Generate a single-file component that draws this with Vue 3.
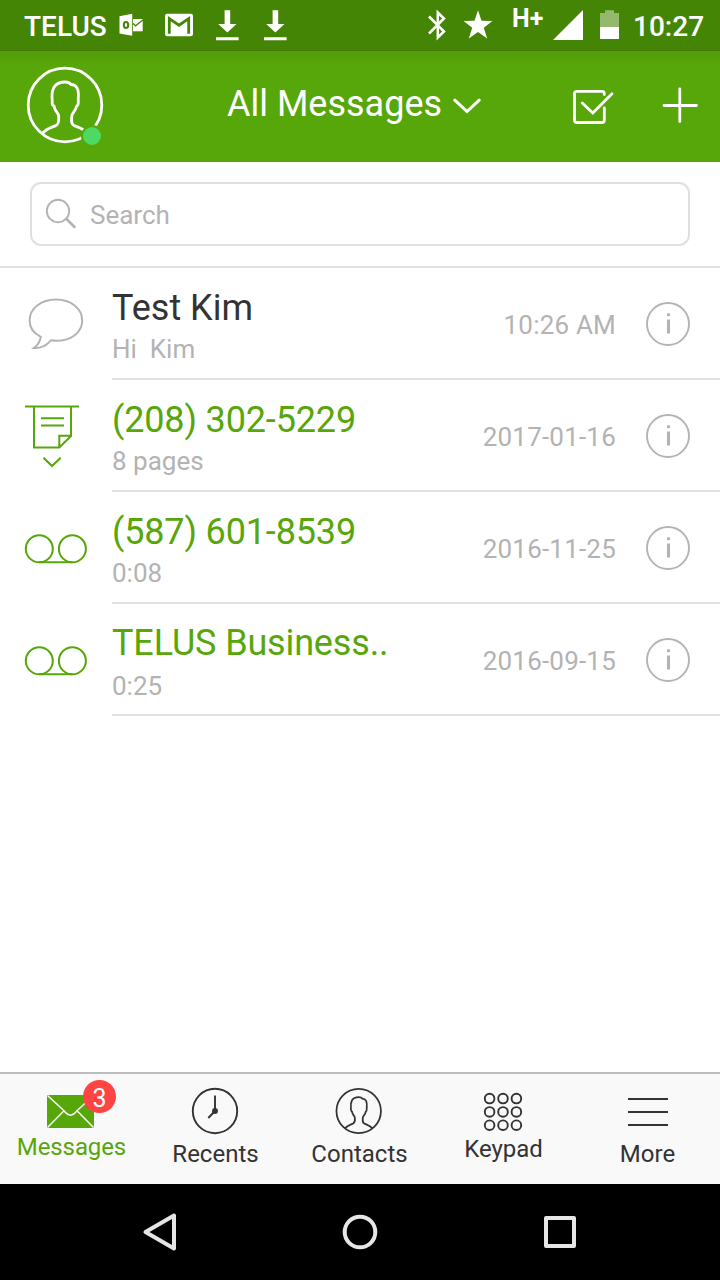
<template>
  <div class="screen">
    <div class="status-bar">
      <span class="carrier">TELUS</span>
      <svg class="notice" viewBox="0 0 48 50">
        <path d="M12.5 16.2 25.2 13.8V35.8L12.5 33.4Z" fill="#fff" />
        <ellipse cx="19" cy="25" rx="2.2" ry="3" fill="none" stroke="#458506" stroke-width="2" />
        <path d="M26 19H35.7V31.3H26Z" fill="#fff" />
        <path d="M26 23.5 28.6 25.8 36 19.8" fill="none" stroke="#458506" stroke-width="1.3" />
      </svg>
      <svg class="notice" viewBox="0 0 48 50">
        <rect x="10" y="13.7" width="28" height="22.6" rx="2.2" fill="#fff" />
        <path d="M14.3 33.7V18.6L24 25.2 33.7 18.6V33.7" fill="none" stroke="#458506" stroke-width="2.8" />
      </svg>
      <svg v-for="n in 2" :key="n" class="notice" viewBox="0 0 48 50">
        <path d="M21.6 10.3H27.2V24H33.5L24.4 32.5 15.2 24H21.6ZM13 37.3H35.6V40.3H13Z" fill="#fff" />
      </svg>
      <svg class="bluetooth" viewBox="0 0 24 50">
        <path d="M4 16.5 19 31.5 12.8 37.5V12.5L19 18.5 4 33.5" fill="none" stroke="#fff" stroke-width="2.5" />
      </svg>
      <svg class="star" viewBox="0 0 32 50">
        <path d="M16 10.3 19.5 20.8 30.4 21 21.8 27.7 25.2 38.5 16 31.9 6.8 38.5 10.2 27.7 1.6 21 12.5 20.8Z" fill="#fff" />
      </svg>
      <span class="network">H+</span>
      <svg class="signal" viewBox="0 0 30 50">
        <path d="M0 40 30 10V40Z" fill="#fff" />
      </svg>
      <svg class="battery" viewBox="0 0 20 50">
        <path d="M0 13H5V10.3H14V13H19V27H0Z" fill="#fff" opacity=".42" />
        <path d="M0 27H19V39H0Z" fill="#fff" />
      </svg>
      <span class="clock">10:27</span>
    </div>

    <header class="header">
      <div class="avatar">
        <svg viewBox="-40 -40 80 80">
          <circle r="36.8" />
          <path :d="personPath" />
        </svg>
        <span class="presence"></span>
      </div>
      <div class="title">
        <span>All Messages</span>
        <svg viewBox="0 0 28 16"><path d="M1.8 2.2 14 13.5 26.2 2.2" /></svg>
      </div>
      <div class="actions">
        <svg class="select-icon" viewBox="0 0 42 36">
          <path d="M32.3 5.5V4.5Q32.3 2.3 30 2.3H4.8Q2.5 2.3 2.5 4.8V31Q2.5 33.5 5 33.5H30Q32.3 33.5 32.3 31V19" />
          <path d="M10.3 14 20.8 24 40 4.8" />
        </svg>
        <svg class="plus-icon" viewBox="0 0 36 36"><path d="M2 18.5H34.5M17.8 2V34.5" /></svg>
      </div>
    </header>

    <div class="search-wrap">
      <label class="search">
        <svg viewBox="0 0 32 32">
          <circle cx="13" cy="13" r="11.2" />
          <path d="M21.5 21 29.5 29" stroke-width="2.6" />
        </svg>
        <input v-model="query" type="text" placeholder="Search" />
      </label>
    </div>

    <ul class="messages">
      <li v-for="message in messages" :key="message.title" class="message">
        <div class="kind">
          <svg v-if="message.kind === 'text'" class="chat" viewBox="0 0 56 52">
            <path d="M12.8 38.8C5 35 1.6 29.5 1.6 22.5 1.6 10.5 13 1.5 28 1.5S54.2 10.5 54.2 22.5 43 43 28 42.8Q25.5 42.8 23 42.3C18 48 13 50.5 5.8 50 10 47 12 43.5 12.8 38.8Z" />
          </svg>
          <svg v-else-if="message.kind === 'fax'" class="fax" viewBox="0 0 56 66">
            <path d="M1 2.5H55M10 2.5V43.5H35.3L47 32V2.5M35.3 43.5V31.8H47M17 14.3H40M17 21.5H40" />
            <path d="M19.5 53.8 28 62 36.7 53.8" />
          </svg>
          <svg v-else class="voicemail" viewBox="0 0 64 32">
            <circle cx="15.3" cy="15.8" r="13.5" />
            <circle cx="48.4" cy="15.8" r="13.5" />
            <path d="M15.3 29.3H48.4" />
          </svg>
        </div>
        <div class="body">
          <div class="text">
            <div class="name" :class="{ unread: message.unread }">{{ message.title }}</div>
            <div class="detail">{{ message.detail }}</div>
          </div>
          <span class="date">{{ message.date }}</span>
          <svg class="info" viewBox="0 0 44 44">
            <circle cx="22" cy="22" r="21" />
            <path d="M22.5 17.5V31.5" />
            <path d="M22.5 11.3V14.2" />
          </svg>
        </div>
      </li>
    </ul>

    <nav class="tabs">
      <a class="tab tab-messages active">
        <div class="tab-icon">
          <svg class="mail" viewBox="0 0 48 34">
            <rect x="0" y="1" width="47" height="33" fill="#57a60a" />
            <path d="M.5 1.5 17 16.8Q23.5 25.5 30 16.8L46.5 1.5M.5 33.5 17 16.8M46.5 33.5 30 16.8" fill="none" stroke="#f9f9f9" stroke-width="1.5" />
          </svg>
          <span class="badge">3</span>
        </div>
        <span class="tab-label">Messages</span>
      </a>
      <a class="tab">
        <svg class="tab-icon line" viewBox="0 0 48 48">
          <circle cx="24" cy="24" r="22.2" />
          <path d="M24 8.5V24L17.3 31" />
          <circle cx="24" cy="24" r="2" fill="#333" />
        </svg>
        <span class="tab-label">Recents</span>
      </a>
      <a class="tab">
        <svg class="tab-icon line" viewBox="-39 -39.5 79 79">
          <circle r="36.6" stroke-width="2.9" />
          <path :d="personPath" stroke-width="2.9" />
        </svg>
        <span class="tab-label">Contacts</span>
      </a>
      <a class="tab tab-keypad">
        <svg class="tab-icon line" viewBox="0 0 48 48">
          <circle v-for="n in 9" :key="n" :cx="10.6 + ((n - 1) % 3) * 13.4" :cy="11.6 + Math.floor((n - 1) / 3) * 13.3" r="4.8" />
        </svg>
        <span class="tab-label">Keypad</span>
      </a>
      <a class="tab">
        <svg class="tab-icon line" viewBox="0 0 48 48">
          <path d="M5 12H45M5 25H45M5 38H45" stroke-width="2" />
        </svg>
        <span class="tab-label">More</span>
      </a>
    </nav>

    <div class="nav-bar">
      <svg viewBox="0 0 40 40"><path d="M5.5 20 34 3.5V36.5Z" /></svg>
      <svg viewBox="0 0 40 40"><circle cx="20" cy="20" r="15.3" /></svg>
      <svg viewBox="0 0 40 40"><rect x="6" y="6" width="28" height="28" /></svg>
    </div>
  </div>
</template>

<script setup>
import { ref } from 'vue';

const query = ref('');

// head and shoulders, centred on 0,0 inside a circle of radius 37
const personPath =
  'M-22.7 28.5C-18 23-13 22.5-9 20.5-5.5 18.7-6.3 15-6.3 11-7 7-10 7-11 1-14 0-12.5-3-12.8-5-14-15-11-23 0-23 3-23 5-22 6-20.5 12-20.5 14-15 13.3-7 12.8-5 14.5 0 11.5 1.5 10 7 7 8 6.8 11 6.5 15 5.7 18.7 9 20.5 13 22.5 18 23 22.7 28.5';

const messages = ref([
  { kind: 'text', title: 'Test Kim', detail: 'Hi  Kim', date: '10:26 AM', unread: false },
  { kind: 'fax', title: '(208) 302-5229', detail: '8 pages', date: '2017-01-16', unread: true },
  { kind: 'voicemail', title: '(587) 601-8539', detail: '0:08', date: '2016-11-25', unread: true },
  { kind: 'voicemail', title: 'TELUS Business..', detail: '0:25', date: '2016-09-15', unread: true }
]);
</script>

<style>
body {
  margin: 0;
}
</style>

<style scoped>
.screen {
  display: flex;
  flex-direction: column;
  width: 720px;
  height: 1280px;
  overflow: hidden;
  background: #fff;
  font-family: Roboto, sans-serif;
}

svg {
  display: block;
  flex: none;
}

.status-bar {
  display: flex;
  height: 50px;
  padding: 0 16px 0 24px;
  background: #458506;
  border-bottom: 1px solid #3f7a06;
  color: #fff;
  font-size: 28px;
  font-weight: 500;
  line-height: 54px;
}

.carrier {
  width: 83px;
}

.notice {
  width: 48px;
  height: 50px;
}

.bluetooth {
  width: 24px;
  height: 50px;
  margin-left: auto;
}

.star {
  width: 32px;
  height: 50px;
  margin-left: 13px;
}

.network {
  width: 33px;
  margin-left: 18px;
  font-size: 25px;
  font-weight: 700;
  line-height: 38px;
}

.signal {
  width: 30px;
  height: 50px;
  margin-left: 8px;
}

.battery {
  width: 20px;
  height: 50px;
  margin-left: 17px;
}

.clock {
  width: 71px;
  margin-left: 13px;
}

.header {
  display: grid;
  grid-template-columns: 200px 1fr 200px;
  align-items: center;
  height: 111px;
  background: linear-gradient(#529c09, #57a60a 14px);
}

.header svg {
  fill: none;
  stroke: #fff;
  stroke-width: 2.8;
}

.avatar {
  position: relative;
  width: 80px;
  height: 80px;
  margin: -3px 0 0 25px;
}

.presence {
  position: absolute;
  left: 56px;
  top: 60px;
  width: 18px;
  height: 18px;
  border: 2px solid #57a60a;
  border-radius: 50%;
  background: #4cd964;
}

.title {
  display: flex;
  align-items: center;
  gap: 12px;
  margin: -5px 0 0 27px;
  color: #fff;
  font-size: 36px;
  line-height: 42px;
  white-space: nowrap;
}

.title svg {
  width: 28px;
  height: 16px;
  margin: 3px 0 0 -1px;
  stroke-width: 3;
  stroke-linecap: round;
}

.actions {
  display: flex;
  align-items: center;
  justify-content: flex-end;
  gap: 48px;
  margin-right: 22px;
  stroke-linecap: round;
}

.select-icon {
  width: 42px;
  height: 36px;
}

.plus-icon {
  width: 36px;
  height: 36px;
  margin-top: -3px;
}

.search-wrap {
  padding: 20px 30px;
  border-bottom: 2px solid #e0e0e0;
}

.search {
  display: flex;
  align-items: center;
  box-sizing: border-box;
  height: 64px;
  padding-left: 13px;
  border: 2px solid #e0e0e0;
  border-radius: 11px;
}

.search svg {
  width: 32px;
  height: 32px;
  fill: none;
  stroke: #b3b3b3;
  stroke-width: 1.9;
  stroke-linecap: round;
}

.search input {
  flex: 1;
  margin: 1px 0 0 13px;
  padding: 0;
  border: none;
  outline: none;
  background: none;
  color: #333;
  font: 26px Roboto, sans-serif;
}

.search input::placeholder {
  color: #b3b3b3;
}

.messages {
  flex: 1;
  margin: 0;
  padding: 0;
  list-style: none;
}

.message {
  display: flex;
  height: 112px;
}

.kind {
  display: flex;
  align-items: center;
  width: 112px;
}

.kind svg {
  margin-top: 1px;
  fill: none;
  stroke: #57a60a;
  stroke-width: 2;
}

.kind .chat {
  width: 56px;
  height: 52px;
  margin: -1px 0 0 28px;
  stroke: #b3b3b3;
}

.fax {
  width: 56px;
  height: 66px;
  margin-left: 24px;
}

.voicemail {
  width: 64px;
  height: 32px;
  margin-left: 24px;
}

.body {
  display: flex;
  flex: 1;
  align-items: center;
  box-sizing: border-box;
  padding-right: 30px;
  border-bottom: 2px solid #e0e0e0;
}

.text {
  flex: 1;
  padding-top: 6px;
}

.name {
  color: #333;
  font-size: 36px;
  line-height: 42px;
}

.name.unread {
  color: #57a60a;
  letter-spacing: -0.15px;
}

.detail {
  margin-top: 3px;
  color: #b3b3b3;
  font-size: 26px;
  line-height: 34px;
  white-space: pre;
}

.message:last-child .detail {
  margin-top: 5px;
}

.date {
  margin: 3px 30px 0 0;
  color: #b3b3b3;
  font-size: 26px;
  letter-spacing: 0.2px;
}

.info {
  width: 44px;
  height: 44px;
  margin-top: 2px;
  fill: none;
  stroke: #b3b3b3;
  stroke-width: 1.9;
}

.info path {
  stroke-width: 3;
}

.tabs {
  display: grid;
  grid-template-columns: repeat(5, 144px);
  height: 110px;
  border-top: 2px solid #bdbdbd;
  background: #f9f9f9;
}

.tab {
  display: flex;
  flex-direction: column;
  align-items: center;
  padding-top: 13px;
  color: #333;
  font-size: 24px;
}

.tab-icon {
  width: 48px;
  height: 48px;
}

.line {
  margin-right: 3px;
  fill: none;
  stroke: #333;
  stroke-width: 1.9;
}

.tab-label {
  margin: 5px 1px 0 0;
  line-height: 28px;
}

.tab-messages .tab-label {
  margin-top: -2px;
  letter-spacing: -0.1px;
}

.tab-keypad .tab-label {
  margin-top: 0;
}

.active {
  color: #57a60a;
}

.tab-messages .tab-icon {
  position: relative;
}

.mail {
  width: 48px;
  height: 34px;
  margin: 7px 0 0 -1px;
}

.badge {
  position: absolute;
  left: 35px;
  top: -7px;
  width: 33px;
  height: 33px;
  border-radius: 50%;
  background: #ff4444;
  color: #fff;
  font-size: 25px;
  line-height: 37px;
  text-align: center;
}

.nav-bar {
  display: flex;
  align-items: center;
  justify-content: center;
  gap: 160px;
  height: 96px;
  background: #000;
}

.nav-bar svg {
  width: 40px;
  height: 40px;
  fill: none;
  stroke: #e6e6e6;
  stroke-width: 4;
  stroke-linejoin: round;
}
</style>
